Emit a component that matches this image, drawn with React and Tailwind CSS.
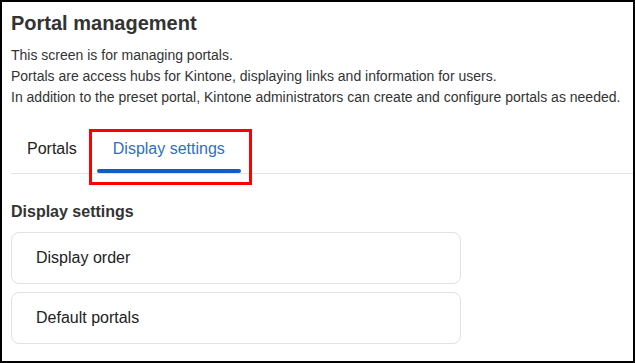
import { useState } from "react";

const tabs = ["Portals", "Display settings"];
const items = ["Display order", "Default portals"];

const App = () => {
  const [active, setActive] = useState("Display settings");

  return (
    <div
      className="w-[635px] h-[363px] overflow-hidden border-2 border-black bg-white text-[#333]"
      style={{ fontFamily: '"Liberation Sans", Arial, sans-serif' }}
    >
      <div className="pt-[9px] pl-[9px]">
        <h1 className="text-[20px] leading-[24px] font-bold">Portal management</h1>
        <div className="mt-[10px] text-[14px] leading-[21px]">
          <p>This screen is for managing portals.</p>
          <p>Portals are access hubs for Kintone, displaying links and information for users.</p>
          <p>In addition to the preset portal, Kintone administrators can create and configure portals as needed.</p>
        </div>

        {/* Tabs */}
        <div className="mt-[17px] flex gap-[4px] border-b border-[#e3e3e3]">
          {tabs.map((t) => {
            const on = t === active;
            return (
              <button
                key={t}
                type="button"
                onClick={() => setActive(t)}
                className="relative flex flex-col"
              >
                <span
                  className={`px-[16px] pt-[12px] pb-[8px] text-[16px] leading-[24px] ${
                    on ? "text-[#2f6fc3]" : "text-[#222]"
                  }`}
                >
                  {t}
                </span>
                <span className={`h-[4px] rounded-full ${on ? "bg-[#0c5fc6]" : "bg-transparent"}`} />
                {on && (
                  <span className="pointer-events-none absolute -left-[8px] -right-[11px] top-[4px] -bottom-[12px] border-[3px] border-[#ff0000]" />
                )}
              </button>
            );
          })}
        </div>

        <h2 className="mt-[26px] text-[16px] leading-[24px] font-bold">Display settings</h2>
        <div className="mt-[8px] flex w-[450px] flex-col gap-[8px]">
          {items.map((it) => (
            <div
              key={it}
              className="rounded-[8px] border border-[#e3e3e3] py-[13px] pl-[24px] text-[16px] leading-[24px] text-[#222]"
            >
              {it}
            </div>
          ))}
        </div>
      </div>
    </div>
  );
};

export default App;
